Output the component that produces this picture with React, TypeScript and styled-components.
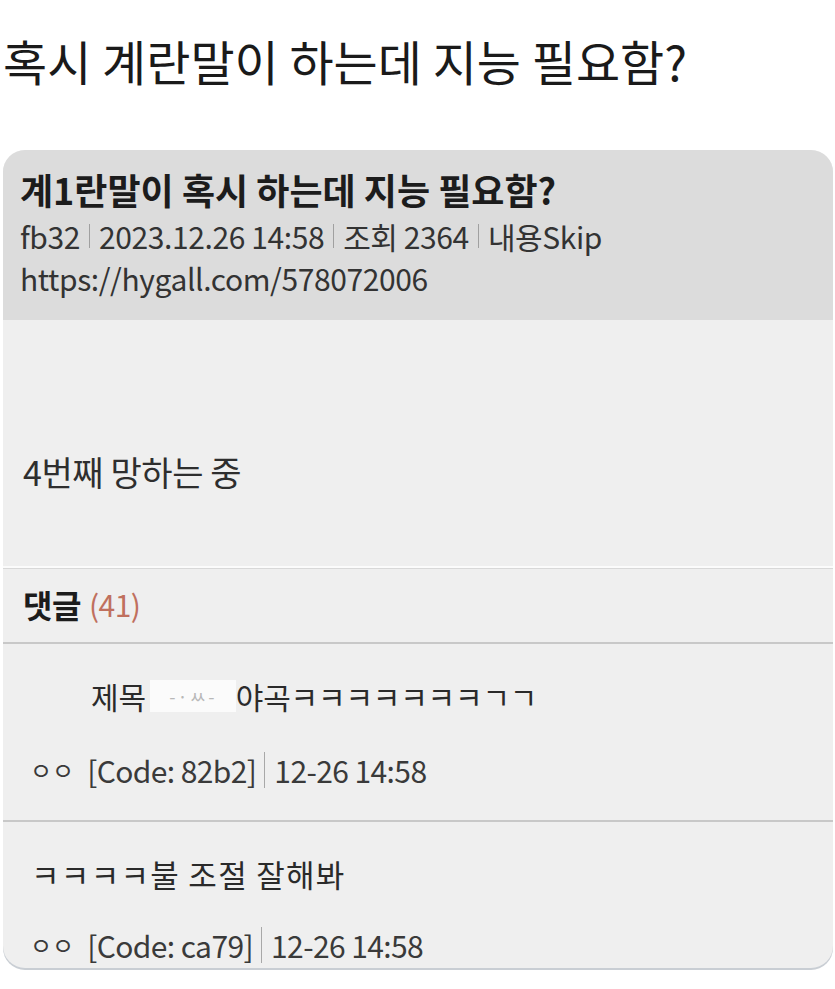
import React from "react";
import styled, { createGlobalStyle } from "styled-components";

const GlobalStyle = createGlobalStyle`
  html, body {
    margin: 0;
    padding: 0;
    background: #ffffff;
  }
  body {
    font-family: "Noto Sans CJK KR", "Noto Sans", sans-serif;
    color: #222;
  }
`;

const Page = styled.div`
  width: 835px;
  min-height: 989px;
  display: flex;
  flex-direction: column;
  background: #fff;
`;

const Headline = styled.h1`
  margin: 0;
  padding: 29px 0 0 3px;
  height: 150px;
  box-sizing: border-box;
  font-size: 48px;
  font-weight: 400;
  line-height: 62px;
  letter-spacing: 0;
  color: #1a1a1a;
`;

const Card = styled.div`
  margin: 0 2px 0 3px;
  border-radius: 22px;
  overflow: hidden;
  background: #efefef;
  box-shadow: 0 2px 0 #c9ced4;
`;

const CardHeader = styled.div`
  background: #dcdcdc;
  height: 170px;
  box-sizing: border-box;
  padding: 14px 17px 0;
  display: flex;
  flex-direction: column;
`;

const PostTitle = styled.div`
  font-size: 36px;
  font-weight: 700;
  line-height: 50px;
  letter-spacing: 0;
  color: #1c1c1c;
`;

const MetaLine = styled.div<{ $height?: number }>`
  font-size: 30px;
  line-height: ${(p) => p.$height ?? 44}px;
  letter-spacing: -0.4px;
  color: #333;
  display: flex;
  align-items: center;
`;

const Bar = styled.span`
  display: inline-block;
  width: 1px;
  height: 24px;
  background: #a0a0a0;
  margin: 0 9px;
`;

const PostBody = styled.div`
  height: 246px;
  box-sizing: border-box;
  padding: 128px 20px 0;
  font-size: 34px;
  letter-spacing: -0.4px;
  color: #2e2e2e;
  line-height: 48px;
`;

const CommentsHead = styled.div`
  height: 78px;
  box-sizing: border-box;
  border-top: 2px solid #fbfbfb;
  border-bottom: 2px solid #c8c8c8;
  box-shadow: inset 0 1px 0 #d8d8d8;
  padding: 0 20px 2px;
  display: flex;
  align-items: center;
  gap: 8px;
`;

const CommentsLabel = styled.span`
  font-size: 32px;
  font-weight: 700;
  color: #1c1c1c;
  letter-spacing: -0.5px;
`;

const CommentsCount = styled.span`
  font-size: 30px;
  color: #c0705e;
  letter-spacing: -0.5px;
`;

const Comment = styled.div<{ $last?: boolean }>`
  height: ${(p) => (p.$last ? 146 : 178)}px;
  box-sizing: border-box;
  padding: 30px 20px 0;
  border-bottom: ${(p) => (p.$last ? "none" : "2px solid #c8c8c8")};
  display: flex;
  flex-direction: column;
  gap: ${(p) => (p.$last ? 29 : 32)}px;
`;

const CommentText = styled.div<{ $indent?: number; $size?: number; $tracking?: number }>`
  padding-left: ${(p) => p.$indent ?? 0}px;
  font-size: ${(p) => p.$size ?? 30}px;
  line-height: 44px;
  letter-spacing: ${(p) => p.$tracking ?? -0.2}px;
  color: #2a2a2a;
  display: flex;
  align-items: center;
`;

const Masked = styled.span`
  display: inline-block;
  width: 86px;
  height: 32px;
  margin: 0 0 0 4px;
  background: #fbfbfb;
  color: #b8b8b8;
  font-size: 18px;
  line-height: 32px;
  text-align: center;
  letter-spacing: 2px;
`;

const CommentMeta = styled.div`
  font-size: 30px;
  line-height: 40px;
  letter-spacing: -0.6px;
  color: #3a3a3a;
  display: flex;
  align-items: center;
`;

const Nick = styled.span`
  font-size: 24px;
  letter-spacing: 0;
  padding-left: 7px;
  margin-right: 13px;
`;

const MetaBar = styled.span`
  display: inline-block;
  width: 1px;
  height: 36px;
  background: #a8a8a8;
  margin: 0 9px 0 8px;
`;

type CommentData = {
  text: React.ReactNode;
  indent?: number;
  size?: number;
  tracking?: number;
  code: string;
  time: string;
};

const comments: CommentData[] = [
  {
    text: (
      <>
        제목<Masked>-·ㅆ-</Masked>야곡ㅋㅋㅋㅋㅋㅋㅋㄱㄱ
      </>
    ),
    indent: 68,
    code: "82b2",
    time: "12-26 14:58",
  },
  {
    text: "ㅋㅋㅋㅋ불 조절 잘해봐",
    indent: 8,
    size: 31,
    tracking: 1.3,
    code: "ca79",
    time: "12-26 14:58",
  },
];

export default function App() {
  return (
    <>
      <GlobalStyle />
      <Page>
        <Headline>혹시 계란말이 하는데 지능 필요함?</Headline>
        <Card>
          <CardHeader>
            <PostTitle>계1란말이 혹시 하는데 지능 필요함?</PostTitle>
            <MetaLine>
              fb32<Bar />2023.12.26 14:58<Bar />조회 2364<Bar />내용Skip
            </MetaLine>
            <MetaLine $height={40}>https://hygall.com/578072006</MetaLine>
          </CardHeader>
          <PostBody>4번째 망하는 중</PostBody>
          <CommentsHead>
            <CommentsLabel>댓글</CommentsLabel>
            <CommentsCount>(41)</CommentsCount>
          </CommentsHead>
          {comments.map((c, i) => (
            <Comment key={c.code} $last={i === comments.length - 1}>
              <CommentText $indent={c.indent} $size={c.size} $tracking={c.tracking}>
                {c.text}
              </CommentText>
              <CommentMeta>
                <Nick>ㅇㅇ</Nick>[Code: {c.code}]<MetaBar />
                {c.time}
              </CommentMeta>
            </Comment>
          ))}
        </Card>
      </Page>
    </>
  );
}
